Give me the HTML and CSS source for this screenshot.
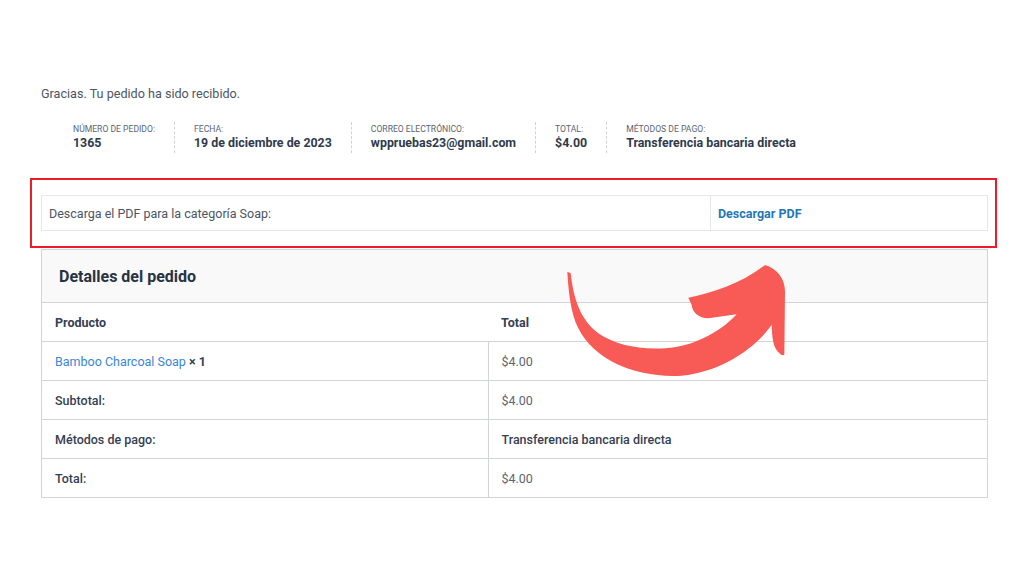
FILE: index.html
```html
<!DOCTYPE html>
<html lang="es">
<head>
  <meta charset="UTF-8" />
  <meta name="viewport" content="width=device-width, initial-scale=1.0"/>
  <title>Pedido recibido</title>
  <link rel="stylesheet" href="styles.css">
</head>
<body>
  <main class="order-page">
    <p class="thanks">Gracias. Tu pedido ha sido recibido.</p>

    <ul class="overview">
      <li><span class="label">Número de pedido:</span><strong>1365</strong></li>
      <li><span class="label">Fecha:</span><strong>19 de diciembre de 2023</strong></li>
      <li><span class="label">Correo electrónico:</span><strong>wppruebas23@gmail.com</strong></li>
      <li><span class="label">Total:</span><strong>$4.00</strong></li>
      <li><span class="label">Métodos de pago:</span><strong>Transferencia bancaria directa</strong></li>
    </ul>

    <div class="highlight">
      <table class="downloads">
        <tr>
          <td>Descarga el PDF para la categoría Soap:</td>
          <td class="dl-link"><a href="#">Descargar PDF</a></td>
        </tr>
      </table>
    </div>

    <section class="details">
      <h2>Detalles del pedido</h2>
      <table class="details-table">
        <colgroup>
          <col class="col-name">
          <col>
        </colgroup>
        <thead>
          <tr><th>Producto</th><th>Total</th></tr>
        </thead>
        <tbody>
          <tr>
            <td><a href="#">Bamboo Charcoal Soap</a> <strong>× 1</strong></td>
            <td>$4.00</td>
          </tr>
        </tbody>
        <tfoot>
          <tr><th>Subtotal:</th><td>$4.00</td></tr>
          <tr><th>Métodos de pago:</th><td class="strong">Transferencia bancaria directa</td></tr>
          <tr><th>Total:</th><td>$4.00</td></tr>
        </tfoot>
      </table>
    </section>
  </main>

  <!-- annotation arrow pointing at the download link -->
  <svg class="arrow" viewBox="0 0 735 390" aria-hidden="true">
    <path fill="#f85a55" d="M37 50 L47 55 C55 120 70 190 130 235 C200 285 330 295 420 260 C480 238 520 205 545 178 L460 190 C430 190 412 170 410 150 L400 128 C470 115 560 85 630 30 C665 40 690 70 690 110 L688 300 L680 300 C660 285 652 270 650 210 C600 280 500 350 380 362 C250 370 120 320 70 220 C45 170 40 100 37 50 Z"/>
  </svg>
</body>
</html>
```

FILE: styles.css
```css
body {
  margin: 0;
  background: #fff;
  font-family: Roboto, "Liberation Sans", Arial, sans-serif;
  color: #4b5563;
}
.order-page {
  width: 947px;
  margin-left: 41px;
  padding-top: 86px;
}
.thanks {
  margin: 0;
  font-size: 12.6px;
  line-height: 15px;
  color: #4b5563;
}
.overview {
  list-style: none;
  display: flex;
  margin: 21px 0 0;
  padding: 0 0 0 32px;
}
.overview li {
  display: flex;
  flex-direction: column;
  padding: 2px 19px 2px 0;
  margin-right: 19px;
  border-right: 1px dashed #d1d5db;
}
.overview li:last-child {
  border-right: none;
}
.overview .label {
  text-transform: uppercase;
  font-size: 8.6px;
  line-height: 10px;
  color: #5b6573;
}
.overview strong {
  font-size: 12.4px;
  line-height: 17px;
  color: #2f3b4c;
}
.highlight {
  margin: 25px -9px 0 -11px;
  padding: 15px 7px 15px 9px;
  border: 2px solid #ee1c24;
}
.downloads {
  width: 100%;
  border-collapse: collapse;
  font-size: 12.5px;
}
.downloads td {
  height: 34px;
  padding: 0 7px;
  border: 1px solid #e5e7eb;
  color: #4b5563;
}
.downloads .dl-link {
  width: 262px;
}
.downloads a {
  color: #1f78b4;
  font-weight: bold;
  text-decoration: none;
}
.details {
  margin-top: 1px;
  border: 1px solid #d1d5db;
}
.details h2 {
  margin: 0;
  height: 52px;
  padding-left: 17px;
  display: flex;
  align-items: center;
  background: #f9f9f9;
  border-bottom: 1px solid #d1d5db;
  font-size: 16px;
  color: #273244;
}
.details-table {
  width: 100%;
  table-layout: fixed;
  border-collapse: collapse;
  font-size: 12.5px;
}
.details-table .col-name {
  width: 446px;
}
.details-table th,
.details-table td {
  height: 38px;
  padding: 0 13px;
  text-align: left;
  border-top: 1px solid #d1d5db;
  color: #5b6573;
  font-weight: normal;
}
.details-table thead th {
  border-top: none;
  font-weight: bold;
  color: #354052;
}
.details-table tfoot th {
  font-weight: 500;
  color: #354052;
}
.details-table tbody td:first-child,
.details-table tfoot th {
  border-right: 1px solid #d1d5db;
}
.details-table a {
  color: #3a86d4;
  text-decoration: none;
}
.details-table strong {
  color: #354052;
}
.details-table .strong {
  font-weight: 500;
  color: #354052;
}
.arrow {
  position: absolute;
  left: 555px;
  top: 255px;
  width: 245px;
  height: 130px;
}
```
